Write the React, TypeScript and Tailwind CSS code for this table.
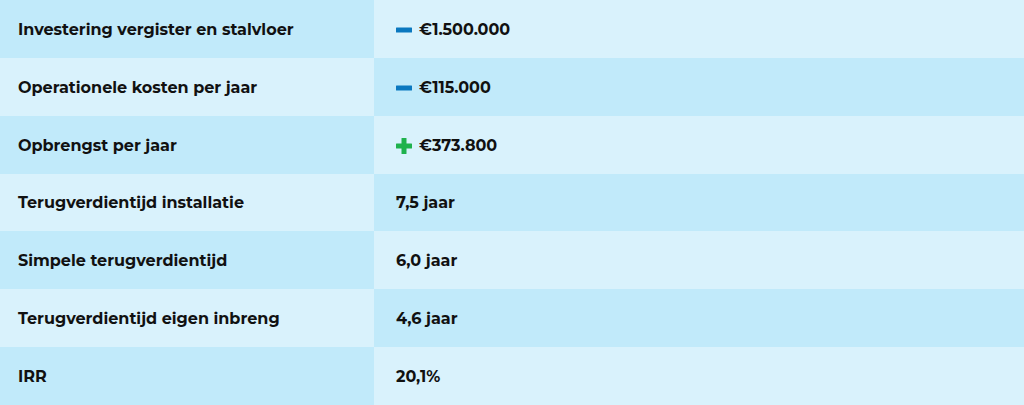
import React from 'react'

type Row = { label: string; value: string; sign?: 'min' | 'plus' }

const rows: Row[] = [
  { label: 'Investering vergister en stalvloer', value: '€1.500.000', sign: 'min' },
  { label: 'Operationele kosten per jaar', value: '€115.000', sign: 'min' },
  { label: 'Opbrengst per jaar', value: '€373.800', sign: 'plus' },
  { label: 'Terugverdientijd installatie', value: '7,5 jaar' },
  { label: 'Simpele terugverdientijd', value: '6,0 jaar' },
  { label: 'Terugverdientijd eigen inbreng', value: '4,6 jaar' },
  { label: 'IRR', value: '20,1%' },
]

function Sign({ type }: { type: 'min' | 'plus' }) {
  if (type === 'min') {
    return (
      <svg width="16" height="6" viewBox="0 0 16 6" className="shrink-0">
        <rect x="0" y="0.5" width="16" height="5" rx="0.5" fill="#0a78bf" />
      </svg>
    )
  }
  return (
    <svg width="16" height="16" viewBox="0 0 16 16" className="shrink-0">
      <rect x="5.5" y="0" width="5" height="16" rx="0.5" fill="#1fb24d" />
      <rect x="0" y="5.5" width="16" height="5" rx="0.5" fill="#1fb24d" />
    </svg>
  )
}

export default function App() {
  return (
    <div className="w-[1024px] h-[405px] grid grid-cols-[374px_1fr] grid-rows-7 font-['Montserrat','Inter',sans-serif] font-bold text-[16px] text-[#111]">
      {rows.map((row, i) => {
        const even = i % 2 === 0
        return (
          <React.Fragment key={row.label}>
            <div className={`flex items-center pl-[18px] pt-[2px] ${even ? 'bg-[#c1eafa]' : 'bg-[#d9f2fc]'}`}>
              {row.label}
            </div>
            <div className={`flex items-center gap-[7px] pl-[22px] pt-[2px] ${even ? 'bg-[#d9f2fc]' : 'bg-[#c1eafa]'}`}>
              {row.sign && <Sign type={row.sign} />}
              <span>{row.value}</span>
            </div>
          </React.Fragment>
        )
      })}
    </div>
  )
}
